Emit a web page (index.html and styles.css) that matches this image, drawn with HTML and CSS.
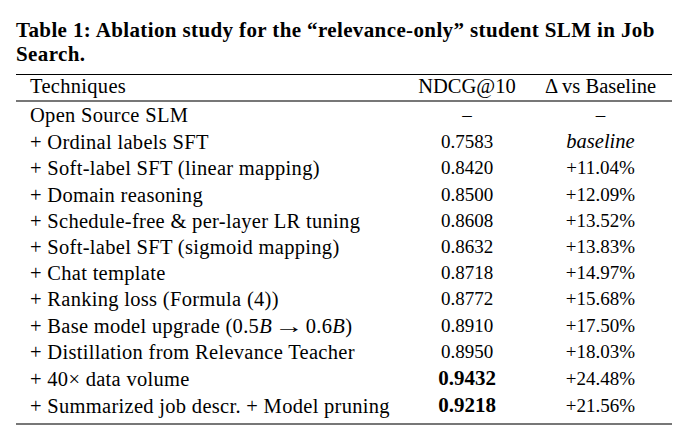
FILE: index.html
```html
<!DOCTYPE html>
<html lang="en">
<head>
<meta charset="utf-8">
<title>Table 1</title>
<link rel="stylesheet" href="styles.css">
</head>
<body>
<div class="page">
  <p class="caption">Table 1: Ablation study for the “relevance-only” student SLM in Job Search.</p>
  <table class="ablation">
    <colgroup>
      <col class="c1"><col class="c2"><col class="c3">
    </colgroup>
    <thead>
      <tr><th class="tech">Techniques</th><th>NDCG@10</th><th>Δ vs Baseline</th></tr>
    </thead>
    <tbody>
      <tr><td class="tech">Open Source SLM</td><td class="num">–</td><td class="num">–</td></tr>
      <tr><td class="tech">+ Ordinal labels SFT</td><td class="num">0.7583</td><td class="num"><em class="base">baseline</em></td></tr>
      <tr><td class="tech">+ Soft-label SFT (linear mapping)</td><td class="num">0.8420</td><td class="num">+11.04%</td></tr>
      <tr><td class="tech">+ Domain reasoning</td><td class="num">0.8500</td><td class="num">+12.09%</td></tr>
      <tr><td class="tech">+ Schedule-free &amp; per-layer LR tuning</td><td class="num">0.8608</td><td class="num">+13.52%</td></tr>
      <tr><td class="tech">+ Soft-label SFT (sigmoid mapping)</td><td class="num">0.8632</td><td class="num">+13.83%</td></tr>
      <tr><td class="tech">+ Chat template</td><td class="num">0.8718</td><td class="num">+14.97%</td></tr>
      <tr><td class="tech">+ Ranking loss (Formula (4))</td><td class="num">0.8772</td><td class="num">+15.68%</td></tr>
      <tr><td class="tech">+ Base model upgrade (0.5<em>B</em><span class="arrow">→</span>0.6<em>B</em>)</td><td class="num">0.8910</td><td class="num">+17.50%</td></tr>
      <tr><td class="tech">+ Distillation from Relevance Teacher</td><td class="num">0.8950</td><td class="num">+18.03%</td></tr>
      <tr><td class="tech">+ 40× data volume</td><td class="num"><strong>0.9432</strong></td><td class="num">+24.48%</td></tr>
      <tr><td class="tech">+ Summarized job descr. + Model pruning</td><td class="num"><strong>0.9218</strong></td><td class="num">+21.56%</td></tr>
    </tbody>
  </table>
</div>
</body>
</html>
```
FILE: styles.css
```css
html, body {
  margin: 0;
  padding: 0;
  background: #ffffff;
}
body {
  font-family: "Liberation Serif", "Times New Roman", serif;
  color: #000000;
}
.page {
  padding: 18px 0 0 16px;
}
.caption {
  margin: 0;
  font-weight: bold;
  font-size: 21px;
  line-height: 24px;
  letter-spacing: 0.38px;
  width: 664px;
}
.ablation {
  margin-top: 8px;
  width: 656px;
  border-collapse: collapse;
  table-layout: fixed;
  font-size: 20.5px;
}
.c1 { width: 389px; }
.c2 { width: 124px; }
.c3 { width: 143px; }
.ablation thead tr {
  border-top: 1px solid #000000;
  border-bottom: 2px solid #777777;
}
.ablation tbody tr:last-child {
  border-bottom: 2px solid #777777;
}
.ablation tbody tr:last-child td {
  padding-bottom: 4px;
}
.ablation th {
  font-weight: normal;
  text-align: center;
  line-height: 23px;
  padding: 0 0 2px 0;
  white-space: nowrap;
}
.ablation td {
  text-align: center;
  line-height: 26.2px;
  padding: 0;
  white-space: nowrap;
}
.ablation .tech {
  text-align: left;
  padding-left: 14px;
  letter-spacing: 0.3px;
}
.ablation .num {
  font-size: 19px;
}
.ablation .num strong {
  font-weight: bold;
  font-size: 21px;
}
.ablation .base {
  font-size: 20.5px;
}
.arrow {
  display: inline-block;
  margin: 0 6px 0 7px;
  transform: scaleX(1.45);
}
```
